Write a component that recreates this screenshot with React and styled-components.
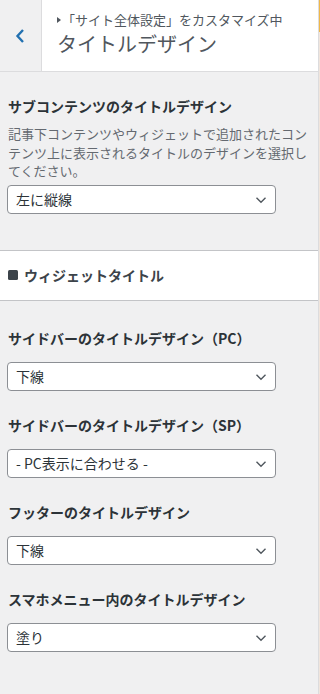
import styled, { createGlobalStyle } from "styled-components"

const GlobalStyle = createGlobalStyle`
    html, body {
        margin: 0;
        padding: 0;
        height: 694px;
        overflow: hidden;
        background: #f0f0f1;
        font-family: "Noto Sans CJK JP", "Noto Sans", sans-serif;
        -webkit-font-smoothing: antialiased;
    }
    #root {
        height: 100%;
    }
`

const controls = [
    { title: "サイドバーのタイトルデザイン（PC）", value: "下線" },
    { title: "サイドバーのタイトルデザイン（SP）", value: "- PC表示に合わせる -" },
    { title: "フッターのタイトルデザイン", value: "下線" },
    { title: "スマホメニュー内のタイトルデザイン", value: "塗り" },
]

function Select({ value }) {
    return (
        <SelectWrap>
            <SelectBox defaultValue={value}>
                <option>{value}</option>
            </SelectBox>
            <Arrow width="12" height="8" viewBox="0 0 12 8">
                <path d="M1.5 1.8 L6 6.2 L10.5 1.8" fill="none" stroke="#50575e" strokeWidth="1.4" />
            </Arrow>
        </SelectWrap>
    )
}

export default function App() {
    return (
        <Page>
            <GlobalStyle />
            <Panel>
                <Header>
                    <BackButton aria-label="戻る">
                        <svg width="10" height="16" viewBox="0 0 10 16">
                            <path d="M8 2 L2.5 8 L8 14" fill="none" stroke="#2271b1" strokeWidth="2.4" />
                        </svg>
                    </BackButton>
                    <HeaderText>
                        <Action><Tri />「サイト全体設定」をカスタマイズ中</Action>
                        <Title>タイトルデザイン</Title>
                    </HeaderText>
                </Header>

                <Content>
                    <FirstControl>
                        <ControlTitle>サブコンテンツのタイトルデザイン</ControlTitle>
                        <Description>
                            記事下コンテンツやウィジェットで追加されたコンテンツ上に表示されるタイトルのデザインを選択してください。
                        </Description>
                        <Select value="左に縦線" />
                    </FirstControl>

                    <Band>
                        <Square />
                        <BandText>ウィジェットタイトル</BandText>
                    </Band>

                    <Controls>
                        {controls.map((c, i) =>
                            <Control key={i}>
                                <ControlTitle>{c.title}</ControlTitle>
                                <Select value={c.value} />
                            </Control>
                        )}
                    </Controls>
                </Content>
            </Panel>
            <Preview />
        </Page>
    )
}

const Page = styled.div`
    display: flex;
    width: 320px;
    height: 694px;
`

const Panel = styled.div`
    width: 318px;
    height: 100%;
    border-right: 1px solid #dcdcde;
    background: #f0f0f1;
    display: flex;
    flex-direction: column;
`

const Preview = styled.div`
    width: 1px;
    height: 100%;
    background: linear-gradient(#f0b849 0, #f0b849 32px, #f1e5dc 32px);
`

const Header = styled.div`
    height: 71px;
    display: flex;
    background: #fff;
    border-bottom: 1px solid #dcdcde;
`

const BackButton = styled.div`
    width: 42px;
    flex-shrink: 0;
    background: #f0f0f1;
    border-right: 1px solid #dcdcde;
    display: flex;
    align-items: center;
    justify-content: center;
    padding-right: 1px;
    box-sizing: border-box;
`

const HeaderText = styled.div`
    padding: 10px 0 0 15px;
    display: flex;
    flex-direction: column;
    color: #50575e;
`

const Action = styled.div`
    font-size: 13px;
    line-height: 20px;
    display: flex;
    align-items: center;
`

const Tri = styled.span`
    width: 0;
    height: 0;
    border-left: 4px solid #50575e;
    border-top: 3px solid transparent;
    border-bottom: 3px solid transparent;
    margin-right: 1px;
`

const Title = styled.div`
    font-size: 20px;
    line-height: 28px;
    font-weight: 400;
    color: #50575e;
`

const Content = styled.div`
    flex: 1;
    padding-top: 22px;
`

const FirstControl = styled.div`
    padding: 0 10px 0 8px;
`

const ControlTitle = styled.div`
    font-size: 14px;
    line-height: 24px;
    font-weight: 700;
    color: #2c3338;
`

const Description = styled.div`
    font-size: 13px;
    line-height: 18.5px;
    color: #646970;
    margin-top: 7px;
    margin-bottom: 4px;
`

const SelectWrap = styled.div`
    position: relative;
    width: 269px;
    margin-left: -1px;
`

const SelectBox = styled.select`
    appearance: none;
    -webkit-appearance: none;
    display: block;
    width: 100%;
    height: 29px;
    box-sizing: border-box;
    border: 1px solid #8c8f94;
    border-radius: 4px;
    background: #fff;
    padding: 0 28px 0 8px;
    font-family: inherit;
    font-size: 14px;
    color: #2c3338;
    outline: none;
`

const Arrow = styled.svg`
    position: absolute;
    right: 9px;
    top: 11px;
    pointer-events: none;
`

const Band = styled.div`
    margin-top: 36px;
    height: 49px;
    background: #fff;
    border-top: 1px solid #c3c4c7;
    border-bottom: 1px solid #c3c4c7;
    display: flex;
    align-items: center;
    padding: 0 8px;
    gap: 6px;
`

const Square = styled.span`
    width: 10px;
    height: 10px;
    border-radius: 1.5px;
    background: #3c434a;
`

const BandText = styled.span`
    font-size: 14px;
    font-weight: 700;
    color: #3c434a;
`

const Controls = styled.div`
    padding: 25px 10px 0 8px;
    display: flex;
    flex-direction: column;
    gap: 22px;
`

const Control = styled.div`
    display: flex;
    flex-direction: column;
    gap: 12px;
`
